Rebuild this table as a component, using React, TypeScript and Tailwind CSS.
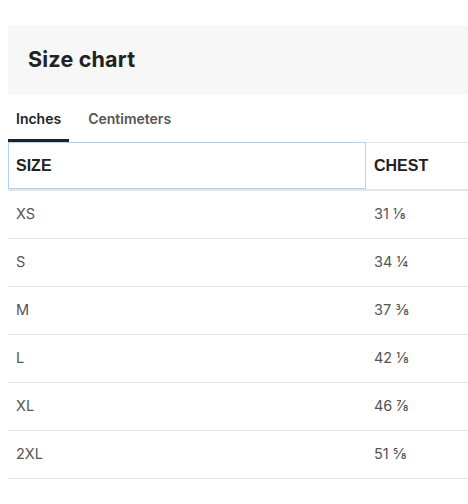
import React from "react";

const rows: [string, string][] = [
  ["XS", "31 ⅛"],
  ["S", "34 ¼"],
  ["M", "37 ⅜"],
  ["L", "42 ⅛"],
  ["XL", "46 ⅞"],
  ["2XL", "51 ⅝"],
];

export default function App() {
  return (
    <div className="w-[468px] h-[504px] bg-white pl-2 pt-[25px] font-['Inter',sans-serif] text-[#222]">
      <div className="h-[70px] bg-[#f7f7f7] flex items-center pl-5">
        <h1 className="text-[21.5px] font-bold tracking-[0.2px] text-[#222] -mt-[1px]">Size chart</h1>
      </div>
      <div className="flex gap-[11px] h-[47px]">
        <div className="px-2 flex items-center pt-[3px] border-b-[3px] border-[#222] text-[14px] font-semibold text-[#222]">
          Inches
        </div>
        <div className="px-2 flex items-center pt-[3px] border-b-[3px] border-transparent text-[14px] font-semibold text-[#555]">
          Centimeters
        </div>
      </div>
      <div className="grid grid-cols-[358px_1fr]">
        <div className="h-[47px] border border-[#a9d4ff] flex items-center pl-[7px] text-[16px] font-bold font-['Liberation_Sans',sans-serif] text-[#222]">
          SIZE
        </div>
        <div className="h-[47px] border-t border-[#e5e5e5] flex items-center pl-2 text-[16px] font-bold font-['Liberation_Sans',sans-serif] text-[#222]">
          CHEST
        </div>
        <div className="col-span-2 h-[2px] bg-[#e5e5e5]" />
        {rows.map(([s, c]) => (
          <React.Fragment key={s}>
            <div className="h-[48px] border-b border-[#e5e5e5] flex items-center pl-2 pb-[1px] text-[14.5px] text-[#555]">
              {s}
            </div>
            <div className="h-[48px] border-b border-[#e5e5e5] flex items-center pl-2 pb-[1px] text-[14.5px] text-[#555]">
              {c}
            </div>
          </React.Fragment>
        ))}
      </div>
    </div>
  );
}
